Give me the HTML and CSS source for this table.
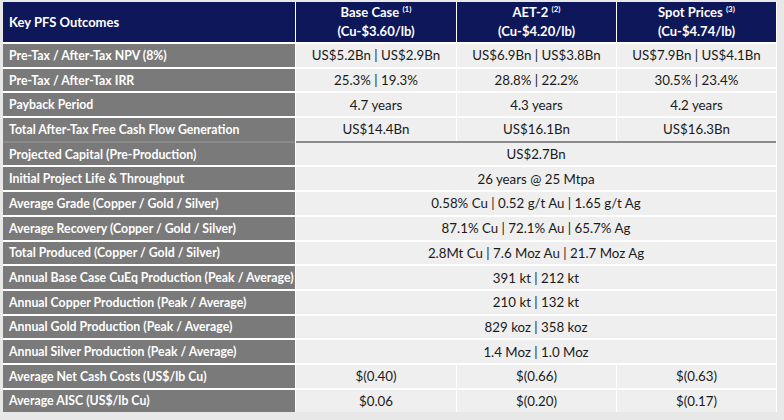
FILE: index.html
```html
<!DOCTYPE html>
<html>
<head>
<meta charset="utf-8">
<link rel="stylesheet" href="styles.css">
</head>
<body>
<div class="table">
  <div class="hd lbl-hd">Key PFS Outcomes</div>
  <div class="hd col-hd"><span>Base Case <sup>(1)</sup><br>(Cu-$3.60/lb)</span></div>
  <div class="hd col-hd"><span>AET-2 <sup>(2)</sup><br>(Cu-$4.20/lb)</span></div>
  <div class="hd col-hd"><span>Spot Prices <sup>(3)</sup><br>(Cu-$4.74/lb)</span></div>

  <div class="lbl">Pre-Tax / After-Tax NPV (8%)</div>
  <div class="val">US$5.2Bn | US$2.9Bn</div>
  <div class="val">US$6.9Bn | US$3.8Bn</div>
  <div class="val">US$7.9Bn | US$4.1Bn</div>

  <div class="lbl">Pre-Tax / After-Tax IRR</div>
  <div class="val">25.3% | 19.3%</div>
  <div class="val">28.8% | 22.2%</div>
  <div class="val">30.5% | 23.4%</div>

  <div class="lbl">Payback Period</div>
  <div class="val">4.7 years</div>
  <div class="val">4.3 years</div>
  <div class="val">4.2 years</div>

  <div class="lbl">Total After-Tax Free Cash Flow Generation</div>
  <div class="val">US$14.4Bn</div>
  <div class="val">US$16.1Bn</div>
  <div class="val">US$16.3Bn</div>

  <div class="lbl sep">Projected Capital (Pre-Production)</div>
  <div class="val span sep">US$2.7Bn</div>

  <div class="lbl">Initial Project Life &amp; Throughput</div>
  <div class="val span">26 years @ 25 Mtpa</div>

  <div class="lbl">Average Grade (Copper / Gold / Silver)</div>
  <div class="val span">0.58% Cu | 0.52 g/t Au | 1.65 g/t Ag</div>

  <div class="lbl">Average Recovery (Copper / Gold / Silver)</div>
  <div class="val span">87.1% Cu | 72.1% Au | 65.7% Ag</div>

  <div class="lbl">Total Produced (Copper / Gold / Silver)</div>
  <div class="val span">2.8Mt Cu | 7.6 Moz Au | 21.7 Moz Ag</div>

  <div class="lbl">Annual Base Case CuEq Production (Peak / Average)</div>
  <div class="val span">391 kt | 212 kt</div>

  <div class="lbl">Annual Copper Production (Peak / Average)</div>
  <div class="val span">210 kt | 132 kt</div>

  <div class="lbl">Annual Gold Production (Peak / Average)</div>
  <div class="val span">829 koz | 358 koz</div>

  <div class="lbl">Annual Silver Production (Peak / Average)</div>
  <div class="val span">1.4 Moz | 1.0 Moz</div>

  <div class="lbl">Average Net Cash Costs (US$/lb Cu)</div>
  <div class="val">$(0.40)</div>
  <div class="val">$(0.66)</div>
  <div class="val">$(0.63)</div>

  <div class="lbl">Average AISC (US$/lb Cu)</div>
  <div class="val">$0.06</div>
  <div class="val">$(0.20)</div>
  <div class="val">$(0.17)</div>
</div>
</body>
</html>
```
FILE: styles.css
```css
html, body {
  margin: 0;
  padding: 0;
  background: #e8e8e8;
  width: 784px;
  height: 420px;
  overflow: hidden;
}
.table {
  margin: 2px 7px 0 3px;
  display: grid;
  grid-template-columns: 292px 160px 159px 159px;
  grid-template-rows: 40px repeat(15, 22.7px);
  gap: 2px 1px;
  background: #ffffff;
  font-family: Lato, "Liberation Sans", sans-serif;
}
.hd {
  background: #0d175a;
  color: #ffffff;
  font-weight: 700;
  display: flex;
  align-items: center;
  font-size: 13px;
}
.lbl-hd {
  padding-left: 6px;
}
.col-hd {
  justify-content: center;
  text-align: center;
  line-height: 17px;
}
.col-hd sup {
  font-size: 8px;
  vertical-align: 0;
  position: relative;
  top: -5px;
}
.lbl {
  background: #7a7a7a;
  color: #ffffff;
  font-weight: 700;
  font-size: 12.3px;
  display: flex;
  align-items: center;
  padding-left: 6px;
}
.val {
  background: #efefef;
  color: #1a1a1a;
  font-size: 13.3px;
  display: flex;
  align-items: center;
  justify-content: center;
}
.span {
  grid-column: span 3;
}
.sep {
  box-shadow: 0 -2px 0 #8a8a8a;
}
```
